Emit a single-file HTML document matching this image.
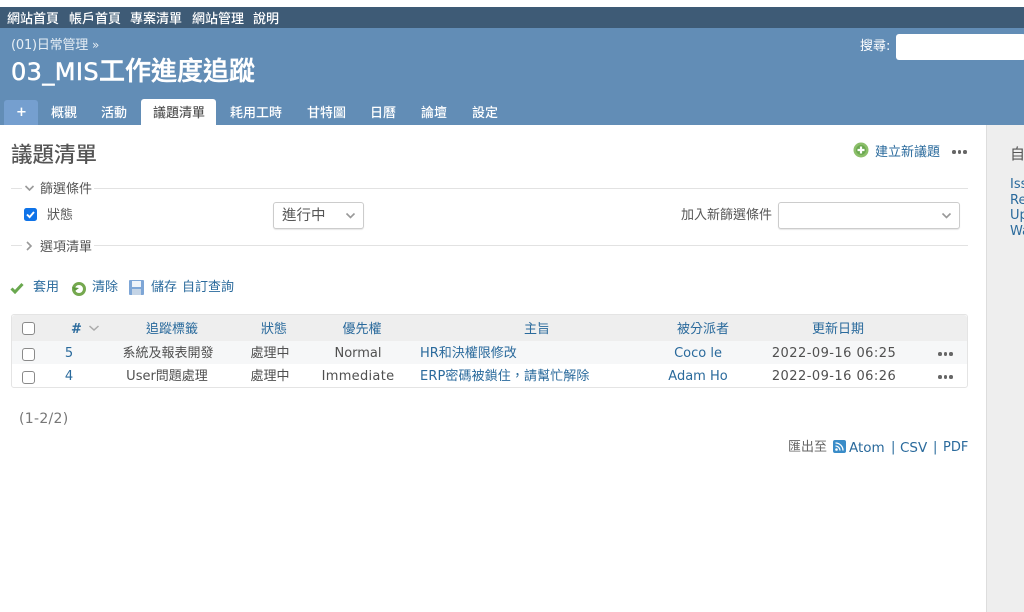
<!DOCTYPE html>
<html lang="zh-Hant"><head><meta charset="utf-8"><title>議題清單</title>
<style>
html,body{margin:0;padding:0;background:#fff}
body{width:1024px;height:612px;overflow:hidden;position:relative;font-family:"DejaVu Sans","Noto Sans CJK TC",sans-serif;font-size:13px;color:#505050}
#p{position:absolute;left:0;top:0;width:1024px;height:612px;filter:blur(.3px)}
.a{position:absolute;white-space:nowrap;line-height:16px}
.l{color:#2a6a9c}
.c{transform:translateX(-50%)}
.w{color:#fff}
.box{position:absolute;box-sizing:border-box;width:13px;height:13px;border:1.5px solid #8a8a8a;border-radius:3px;background:#fff;left:22px}
.tab{position:absolute;top:106px;color:#fff;font-size:13px;line-height:16px;font-weight:500}
.dots{position:absolute;display:flex;gap:2px}
.dots i{width:3.5px;height:3.5px;border-radius:50%;background:#666;display:block}
.rule{position:absolute;height:1px;background:#e2e2e2}
.d{letter-spacing:.45px}
</style></head><body><div id="p">
<div class="a" style="left:0;top:0;width:1024px;height:7px;background:#fff"></div>
<div class="a" style="left:0;top:7px;width:1024px;height:21px;background:#3e5b76"></div>
<div class="a" style="left:0;top:28px;width:1024px;height:97px;background:#628db6"></div>
<div class="a w" style="left:7px;top:12px;font-weight:500">網站首頁</div>
<div class="a w" style="left:69px;top:12px;font-weight:500">帳戶首頁</div>
<div class="a w" style="left:130px;top:12px;font-weight:500">專案清單</div>
<div class="a w" style="left:192px;top:12px;font-weight:500">網站管理</div>
<div class="a w" style="left:253px;top:12px;font-weight:500">說明</div>
<div class="a" style="left:11px;top:37px;color:#e6eef5;letter-spacing:-.2px">(01)日常管理 <span style="font-size:12px">»</span></div>
<div class="a w" style="left:11px;top:57px;font-size:26px;line-height:30px;font-weight:500;-webkit-text-stroke:.5px #fff"><span style="font-size:24px;letter-spacing:.4px">03_MIS</span>工作進度追蹤</div>
<div class="a w" style="left:860px;top:39px">搜尋:</div>
<div class="a" style="left:896px;top:34px;width:130px;height:26px;background:#fff;border-radius:3px"></div>

<div class="a" style="left:4px;top:100px;width:34px;height:25px;background:#759fcf;border-radius:3px 3px 0 0"></div>
<div class="a w" style="left:16px;top:105px;font-weight:700;font-size:13px">+</div>
<div class="a" style="left:141px;top:99px;width:75px;height:26px;background:#fff;border-radius:3px 3px 0 0"></div>
<div class="tab" style="left:51px">概觀</div>
<div class="tab" style="left:101px">活動</div>
<div class="tab" style="left:153px;color:#555">議題清單</div>
<div class="tab" style="left:230px">耗用工時</div>
<div class="tab" style="left:307px">甘特圖</div>
<div class="tab" style="left:370px">日曆</div>
<div class="tab" style="left:421px">論壇</div>
<div class="tab" style="left:472px">設定</div>

<div class="a" style="left:986px;top:125px;width:38px;height:487px;background:#eee;border-left:1px solid #ddd;box-sizing:border-box"></div>
<div class="a" style="left:1010px;top:146px;font-size:15px;color:#555">自</div>
<div class="a l" style="left:1010px;top:177px;line-height:15.5px;white-space:pre">Issues
Re
Up
Wa</div>

<div class="a" style="left:11px;top:144px;font-size:21.5px;line-height:24px;color:#555;font-weight:500">議題清單</div>
<svg class="a" style="left:853px;top:142px" width="16" height="16" viewBox="0 0 16 16"><circle cx="8" cy="8" r="7.500" fill="#8cbf6a"/><circle cx="8" cy="8" r="5" fill="#6aa84f"/><path d="M8 4.500v7M4.500 8h7" stroke="#fff" stroke-width="2.200"/></svg>
<div class="a l" style="left:875px;top:145px">建立新議題</div>
<div class="dots" style="left:952px;top:150px"><i></i><i></i><i></i></div>

<div class="rule" style="left:11px;top:188px;width:957px"></div>
<div class="a" style="left:22px;top:180px;background:#fff;width:72px;height:16px"></div>
<svg class="a" style="left:24px;top:185px" width="11" height="7" viewBox="0 0 11 7"><path d="M1.500 1l4 4 4-4" fill="none" stroke="#999" stroke-width="1.600"/></svg>
<div class="a" style="left:40px;top:182px;color:#555">篩選條件</div>
<div class="a" style="left:24px;top:208px;width:13px;height:13px;background:#0f73e8;border-radius:2.500px"></div>
<svg class="a" style="left:24px;top:208px" width="13" height="13" viewBox="0 0 13 13"><path d="M3 6.500l2.600 2.600L10 4" fill="none" stroke="#fff" stroke-width="1.900"/></svg>
<div class="a" style="left:47px;top:208px;color:#555">狀態</div>
<div class="a" style="left:273px;top:202px;width:91px;height:27px;box-sizing:border-box;border:1px solid #ccc;border-radius:3px;background:#fff;box-shadow:0 1px 1px #e6e6e6"></div>
<div class="a" style="left:282px;top:208px;font-size:14.500px;color:#555">進行中</div>
<svg class="a" style="left:345px;top:212px" width="11" height="8" viewBox="0 0 11 8"><path d="M1.500 1.500l4 4 4-4" fill="none" stroke="#999" stroke-width="1.600"/></svg>
<div class="a" style="left:681px;top:208px;color:#555">加入新篩選條件</div>
<div class="a" style="left:778px;top:202px;width:182px;height:27px;box-sizing:border-box;border:1px solid #ccc;border-radius:3px;background:#fff;box-shadow:0 1px 1px #e6e6e6"></div>
<svg class="a" style="left:941px;top:212px" width="11" height="8" viewBox="0 0 11 8"><path d="M1.500 1.500l4 4 4-4" fill="none" stroke="#999" stroke-width="1.600"/></svg>

<div class="rule" style="left:11px;top:245px;width:957px"></div>
<div class="a" style="left:22px;top:238px;background:#fff;width:72px;height:16px"></div>
<svg class="a" style="left:26px;top:241px" width="7" height="10" viewBox="0 0 7 10"><path d="M1 1l4 4-4 4" fill="none" stroke="#999" stroke-width="1.600"/></svg>
<div class="a" style="left:40px;top:240px;color:#555">選項清單</div>

<svg class="a" style="left:10px;top:282px" width="14" height="12" viewBox="0 0 14 12"><path d="M1.500 6.500l3.500 3.500 7.500-8" fill="none" stroke="#6aa84f" stroke-width="3"/></svg>
<div class="a l" style="left:33px;top:280px">套用</div>
<svg class="a" style="left:71px;top:281px" width="16" height="16" viewBox="0 0 16 16"><circle cx="8" cy="8" r="5.500" fill="none" stroke="#75a84f" stroke-width="3"/><path d="M1 6l3 4 4-3z" fill="#5c9a3c"/></svg>
<div class="a l" style="left:92px;top:280px">清除</div>
<svg class="a" style="left:129px;top:280px" width="15" height="15" viewBox="0 0 15 15"><rect width="15" height="15" rx="1" fill="#7ea6d6"/><rect x="3" y="1" width="9" height="6" fill="#eef3f9"/><rect x="3" y="9" width="9" height="6" fill="#c4d4e6"/></svg>
<div class="a l" style="left:151px;top:280px">儲存</div>
<div class="a l" style="left:182px;top:280px">自訂查詢</div>

<div class="a" style="left:11px;top:314px;width:957px;height:74px;box-sizing:border-box;border:1px solid #e4e4e4;border-radius:3px;background:#fff"></div>
<div class="a" style="left:12px;top:315px;width:955px;height:26px;background:#eee;border-radius:3px 3px 0 0"></div>
<div class="a" style="left:12px;top:341px;width:955px;height:23px;background:#f6f7f8"></div>
<div class="box" style="top:322px"></div><div class="box" style="top:348px"></div><div class="box" style="top:371px"></div>
<div class="a" style="left:71px;top:322px;font-weight:700;color:#2a6a9c">#</div>
<svg class="a" style="left:88px;top:325px" width="12" height="7" viewBox="0 0 12 7"><path d="M1.500 1l4.500 4 4.500-4" fill="none" stroke="#aaa" stroke-width="1.500"/></svg>
<div class="a l c" style="left:172px;top:322px">追蹤標籤</div>
<div class="a l c" style="left:274px;top:322px">狀態</div>
<div class="a l c" style="left:362px;top:322px">優先權</div>
<div class="a l c" style="left:537px;top:322px">主旨</div>
<div class="a l c" style="left:703px;top:322px">被分派者</div>
<div class="a l c" style="left:838px;top:322px">更新日期</div>

<div class="a l c" style="left:69px;top:346px">5</div>
<div class="a c" style="left:168px;top:346px">系統及報表開發</div>
<div class="a c" style="left:270px;top:346px">處理中</div>
<div class="a c" style="left:358px;top:346px">Normal</div>
<div class="a l" style="left:420px;top:346px">HR和決權限修改</div>
<div class="a l c" style="left:698px;top:346px">Coco le</div>
<div class="a c d" style="left:834px;top:346px">2022-09-16 06:25</div>
<div class="dots" style="left:938px;top:352px"><i></i><i></i><i></i></div>

<div class="a l c" style="left:69px;top:369px">4</div>
<div class="a c" style="left:167px;top:369px">User問題處理</div>
<div class="a c" style="left:270px;top:369px">處理中</div>
<div class="a c" style="left:358px;top:369px;letter-spacing:.3px">Immediate</div>
<div class="a l" style="left:420px;top:369px;letter-spacing:.1px">ERP密碼被鎖住，請幫忙解除</div>
<div class="a l c" style="left:698px;top:369px">Adam Ho</div>
<div class="a c d" style="left:834px;top:369px">2022-09-16 06:26</div>
<div class="dots" style="left:938px;top:375px"><i></i><i></i><i></i></div>

<div class="a" style="left:19px;top:411px;color:#777;font-size:14px;letter-spacing:.3px">(1-2/2)</div>
<div class="a" style="left:788px;top:440px;color:#666">匯出至</div>
<svg class="a" style="left:833px;top:440px" width="13" height="13" viewBox="0 0 13 13"><rect width="13" height="13" rx="2" fill="#3a8cc8"/><circle cx="3.500" cy="9.500" r="1.300" fill="#fff"/><path d="M2.500 6a4.500 4.500 0 0 1 4.500 4.500M2.500 3a7.500 7.500 0 0 1 7.500 7.500" fill="none" stroke="#fff" stroke-width="1.300"/></svg>
<div class="a l" style="left:849px;top:440px;font-size:13.500px">Atom</div>
<div class="a l" style="left:891px;top:440px">|</div>
<div class="a l" style="left:900px;top:440px;font-size:13.500px">CSV</div>
<div class="a l" style="left:933px;top:440px">|</div>
<div class="a l" style="left:943px;top:440px">PDF</div>
</div></body></html>
